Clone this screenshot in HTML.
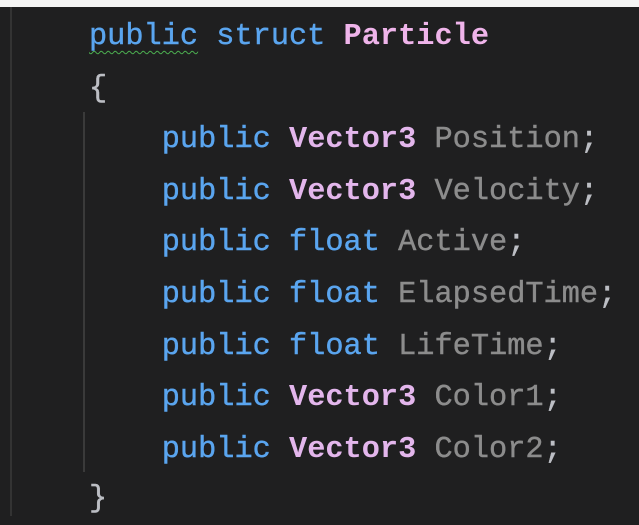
<!DOCTYPE html>
<html><head><style>
body{margin:0;width:639px;height:516px;background:#1f1f20;overflow:hidden;position:relative}
.top{position:absolute;left:0;top:0;width:639px;height:7px;background:#f4f4f4}
.v1{position:absolute;left:10px;top:7px;width:2px;height:509px;background:#333}
.v2{position:absolute;left:83px;top:112px;width:2px;height:360px;background:#3a3a3a}
.l{position:absolute;left:89px;font-family:"Liberation Mono",monospace;font-size:30.3px;line-height:52px;white-space:pre;color:#bcbec4;-webkit-text-stroke:0.4px}
.k{color:#5aa5ef}
.t{color:#e3b6ec;font-weight:bold;-webkit-text-stroke:0}
.p{color:#efb4ea;font-weight:bold;-webkit-text-stroke:0}
.f{color:#8c8c8c}
.w{text-decoration:underline wavy #4caf50;text-decoration-thickness:1px;text-underline-offset:6px}
</style></head><body>
<div class="top"></div><div class="v1"></div><div class="v2"></div>
<div class="l" style="top:11px"><span class="k w">public</span><span class="k"> struct </span><span class="p">Particle</span></div>
<div class="l" style="top:63px">{</div>
<div class="l" style="top:114px">    <span class="k">public</span> <span class="t">Vector3</span> <span class="f">Position</span>;</div>
<div class="l" style="top:166px">    <span class="k">public</span> <span class="t">Vector3</span> <span class="f">Velocity</span>;</div>
<div class="l" style="top:217px">    <span class="k">public float</span> <span class="f">Active</span>;</div>
<div class="l" style="top:269px">    <span class="k">public float</span> <span class="f">ElapsedTime</span>;</div>
<div class="l" style="top:321px">    <span class="k">public float</span> <span class="f">LifeTime</span>;</div>
<div class="l" style="top:372px">    <span class="k">public</span> <span class="t">Vector3</span> <span class="f">Color1</span>;</div>
<div class="l" style="top:424px">    <span class="k">public</span> <span class="t">Vector3</span> <span class="f">Color2</span>;</div>
<div class="l" style="top:473px">}</div>
</body></html>
